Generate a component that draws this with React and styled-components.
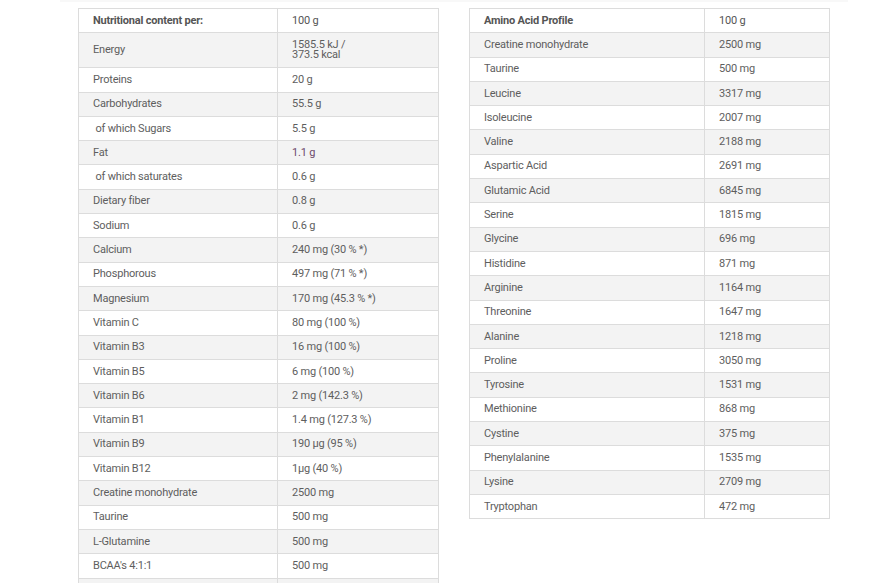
import React from "react";
import styled, { createGlobalStyle } from "styled-components";

const nutrition = [
  ["Energy", "1585.5 kJ /\n373.5 kcal"],
  ["Proteins", "20 g"],
  ["Carbohydrates", "55.5 g"],
  ["\u00a0of which Sugars", "5.5 g"],
  ["Fat", "1.1 g", true],
  ["\u00a0of which saturates", "0.6 g"],
  ["Dietary fiber", "0.8 g"],
  ["Sodium", "0.6 g"],
  ["Calcium", "240 mg (30 % *)"],
  ["Phosphorous", "497 mg (71 % *)"],
  ["Magnesium", "170 mg (45.3 % *)"],
  ["Vitamin C", "80 mg (100 %)"],
  ["Vitamin B3", "16 mg (100 %)"],
  ["Vitamin B5", "6 mg (100 %)"],
  ["Vitamin B6", "2 mg (142.3 %)"],
  ["Vitamin B1", "1.4 mg (127.3 %)"],
  ["Vitamin B9", "190 µg (95 %)"],
  ["Vitamin B12", "1µg (40 %)"],
  ["Creatine monohydrate", "2500 mg"],
  ["Taurine", "500 mg"],
  ["L-Glutamine", "500 mg"],
  ["BCAA's 4:1:1", "500 mg"],
  ["", ""],
];

const amino = [
  ["Creatine monohydrate", "2500 mg"],
  ["Taurine", "500 mg"],
  ["Leucine", "3317 mg"],
  ["Isoleucine", "2007 mg"],
  ["Valine", "2188 mg"],
  ["Aspartic Acid", "2691 mg"],
  ["Glutamic Acid", "6845 mg"],
  ["Serine", "1815 mg"],
  ["Glycine", "696 mg"],
  ["Histidine", "871 mg"],
  ["Arginine", "1164 mg"],
  ["Threonine", "1647 mg"],
  ["Alanine", "1218 mg"],
  ["Proline", "3050 mg"],
  ["Tyrosine", "1531 mg"],
  ["Methionine", "868 mg"],
  ["Cystine", "375 mg"],
  ["Phenylalanine", "1535 mg"],
  ["Lysine", "2709 mg"],
  ["Tryptophan", "472 mg"],
];

const Global = createGlobalStyle`
  body {
    margin: 0;
    background: #fff;
    font-family: Roboto, "Noto Sans", sans-serif;
  }
`;

const Page = styled.div`
  height: 583px;
  overflow: hidden;
  border-top: 2px solid #f8f8f8;
  margin: 0 27px 0 60px;
`;

const Columns = styled.div`
  display: flex;
  align-items: flex-start;
  gap: 30px;
  padding: 6px 0 0 18px;
`;

const Table = styled.table`
  border-collapse: collapse;
  width: ${(p) => p.$width}px;
  table-layout: fixed;
  font-size: 11px;
  color: #5e5e5e;
  letter-spacing: -0.2px;
`;

const Row = styled.tr`
  height: 24.3px;
  background: ${(p) => (p.$striped ? "#f3f3f3" : "#fff")};
`;

const Cell = styled.td`
  border: 1px solid #dcdcdc;
  padding: 0 14px;
  vertical-align: middle;
  line-height: 10px;
  white-space: pre-line;
  color: ${(p) => (p.$accent ? "#6d4a6c" : "inherit")};
`;

const HeadCell = styled(Cell)`
  font-weight: 700;
  color: #555;
  height: 23px;
`;

const TallCell = styled(Cell)`
  height: 34px;
`;

const NutriTable = ({ head, rows, width, split }) => (
  <Table $width={width}>
    <colgroup>
      <col style={{ width: split }} />
      <col />
    </colgroup>
    <tbody>
      <Row>
        <HeadCell>{head}</HeadCell>
        <HeadCell as="td" style={{ fontWeight: 400 }}>100 g</HeadCell>
      </Row>
      {rows.map(([label, value, accent], i) => {
        const C = value.includes("\n") ? TallCell : Cell;
        return (
          <Row key={label + i} $striped={i % 2 === 0}>
            <C>{label}</C>
            <C $accent={accent}>{value}</C>
          </Row>
        );
      })}
    </tbody>
  </Table>
);

const App = () => (
  <>
    <Global />
    <Page>
      <Columns>
        <NutriTable head="Nutritional content per:" rows={nutrition} width={361} split={199} />
        <NutriTable head="Amino Acid Profile" rows={amino} width={361} split={235} />
      </Columns>
    </Page>
  </>
);

export default App;
